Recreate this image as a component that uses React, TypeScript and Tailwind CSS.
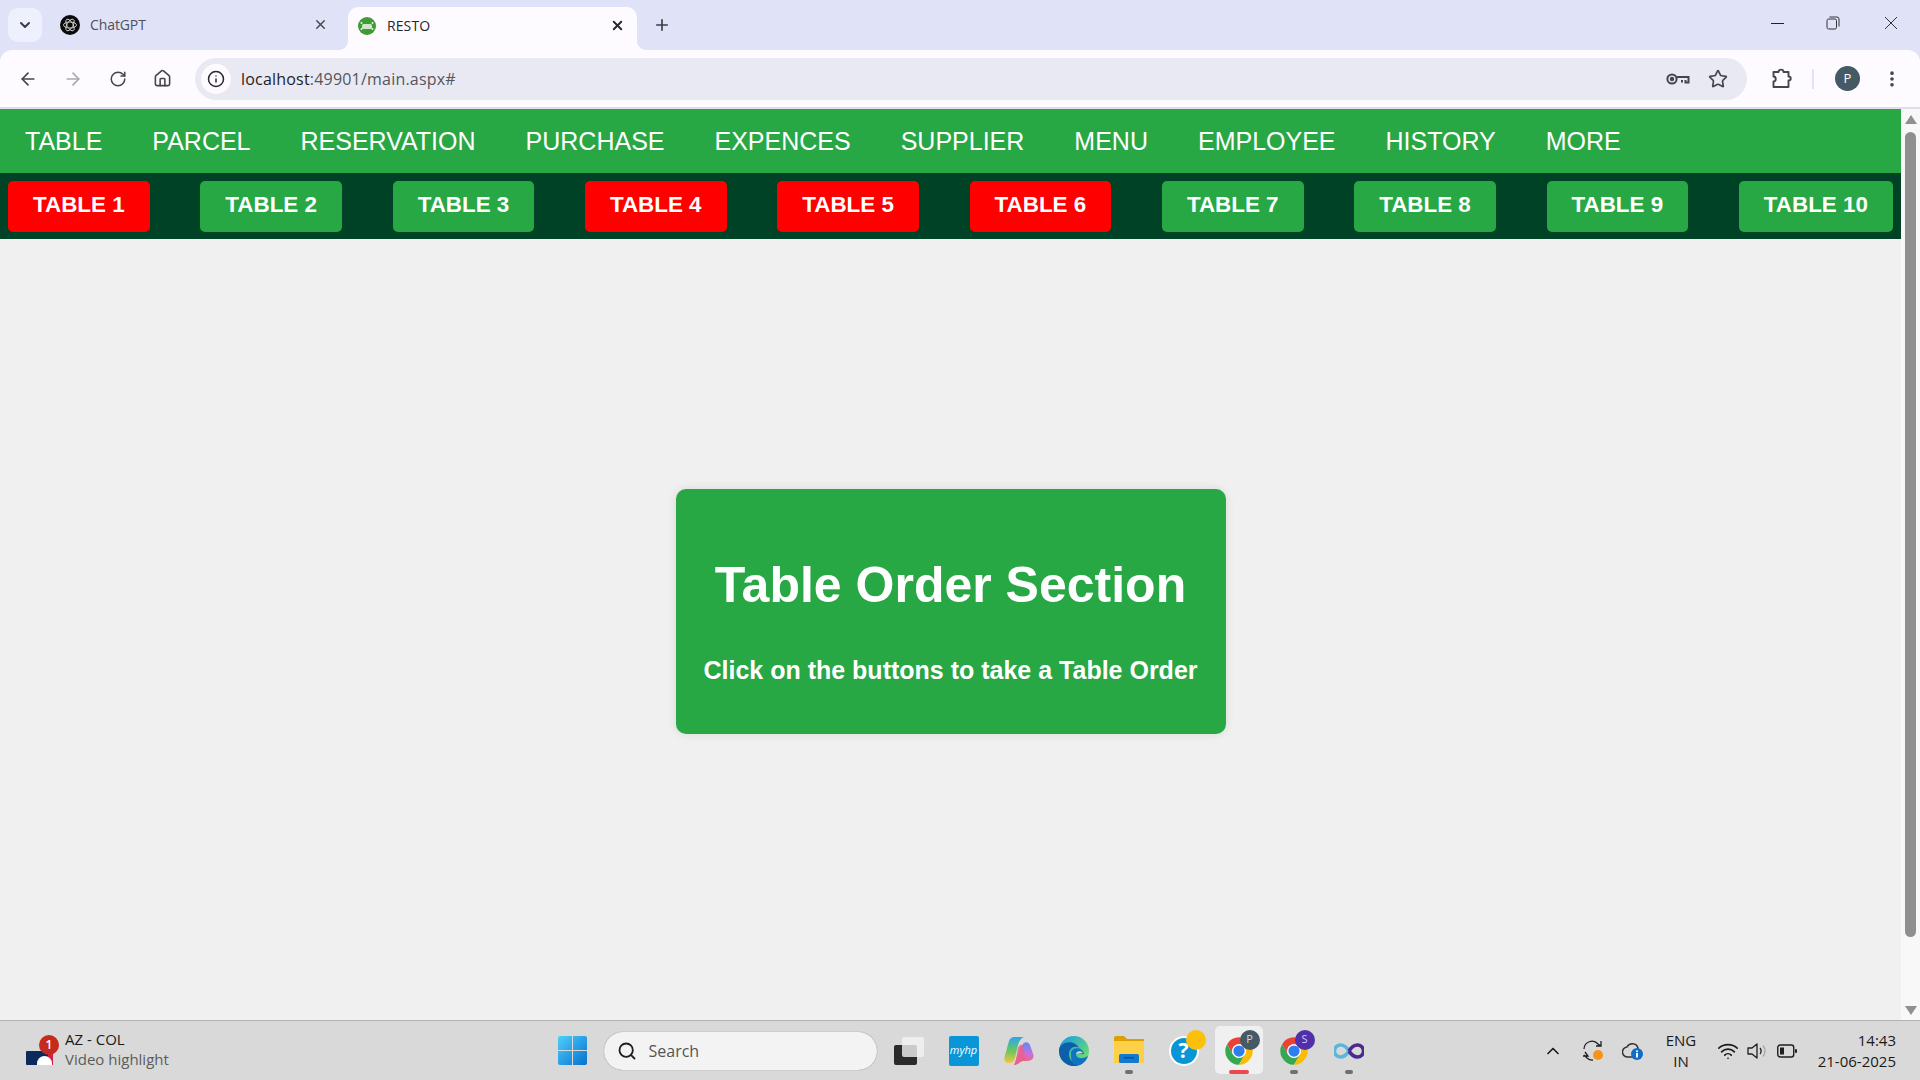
import { ArrowLeft, ArrowRight, ChevronDown, ChevronUp, House, Info, MoreVertical, Plus, RotateCw, Search, Star, Wifi, X } from 'lucide-react';

const navItems = ['TABLE', 'PARCEL', 'RESERVATION', 'PURCHASE', 'EXPENCES', 'SUPPLIER', 'MENU', 'EMPLOYEE', 'HISTORY', 'MORE'];

const tables = [
  { name: 'TABLE 1', busy: true },
  { name: 'TABLE 2', busy: false },
  { name: 'TABLE 3', busy: false },
  { name: 'TABLE 4', busy: true },
  { name: 'TABLE 5', busy: true },
  { name: 'TABLE 6', busy: true },
  { name: 'TABLE 7', busy: false },
  { name: 'TABLE 8', busy: false },
  { name: 'TABLE 9', busy: false },
  { name: 'TABLE 10', busy: false },
];

function ChromeLogo() {
  return (
    <svg width="30" height="30" viewBox="0 0 48 48">
      <path d="M4.95 13A22 22 0 0 1 43.05 13H24A11 11 0 0 0 14.47 29.5Z" fill="#ea4335" />
      <path d="M4.95 13A22 22 0 0 0 24 46L33.53 29.5A11 11 0 0 1 14.47 29.5Z" fill="#34a853" />
      <path d="M24 46A22 22 0 0 0 43.05 13H24A11 11 0 0 1 33.53 29.5Z" fill="#fbbc04" />
      <circle cx="24" cy="24" r="11" fill="#fff" />
      <circle cx="24" cy="24" r="9" fill="#2f7df0" />
    </svg>
  );
}

function TaskSlot({ children, dot }: { children: React.ReactNode; dot?: boolean }) {
  return (
    <div className="relative flex h-[60px] w-[55px] items-center justify-center">
      {children}
      {dot && <div className="absolute bottom-[7px] left-1/2 h-[4px] w-[8px] -translate-x-1/2 rounded-full bg-[#6f6f6f]" />}
    </div>
  );
}

function ChromeTabs() {
  return (
    <div className="flex h-[50px] shrink-0 bg-[#e0e2f8] text-[#3d3d45]">
      <div className="ml-2 mt-2 flex h-[34px] w-[34px] items-center justify-center rounded-[10px] bg-[#eff0fe]">
        <ChevronDown size={16} strokeWidth={3} />
      </div>
      <div className="flex h-[50px] w-[306px] items-center pb-[1px] pl-[18px]">
        <svg width="20" height="20" viewBox="0 0 20 20" className="shrink-0">
          <circle cx="10" cy="10" r="10" fill="#0b0b0b" />
          <g fill="none" stroke="#e8e8e8" strokeWidth="0.8">
            <ellipse cx="10" cy="10" rx="6.5" ry="3" />
            <ellipse cx="10" cy="10" rx="6.5" ry="3" transform="rotate(60 10 10)" />
            <ellipse cx="10" cy="10" rx="6.5" ry="3" transform="rotate(120 10 10)" />
          </g>
        </svg>
        <span className="ml-[10px] flex-1 text-[14px] text-[#4f5058] [font-family:'Open_Sans',sans-serif] tracking-[-0.1px]">ChatGPT</span>
        <X size={15} strokeWidth={2.4} className="mr-[20px] text-[#4a4a52]" />
      </div>
      <div className="relative mt-[7px] flex h-[43px] w-[289px] items-center rounded-t-[10px] bg-[#fdfbff] pb-[6px] pl-[10px]">
        <div className="absolute -left-[10px] bottom-0 h-[10px] w-[10px] bg-[radial-gradient(circle_at_0_0,#e0e2f8_10px,#fdfbff_10.5px)]" />
        <div className="absolute -right-[10px] bottom-0 h-[10px] w-[10px] bg-[radial-gradient(circle_at_100%_0,#e0e2f8_10px,#fdfbff_10.5px)]" />
        <svg width="18" height="18" viewBox="0 0 18 18" className="shrink-0">
          <circle cx="9" cy="9" r="9" fill="#3f9a38" />
          <rect x="4" y="7" width="10" height="5" rx="1.5" fill="#cfe6c9" />
          <circle cx="3.5" cy="6" r="1" fill="#e8f3e5" />
          <circle cx="14.5" cy="6" r="1" fill="#e8f3e5" />
          <circle cx="3.5" cy="12" r="1" fill="#e8f3e5" />
          <circle cx="14.5" cy="12" r="1" fill="#e8f3e5" />
        </svg>
        <span className="ml-[11px] flex-1 text-[14px] text-[#26262c] [font-family:'Open_Sans',sans-serif] tracking-[0.1px]">RESTO</span>
        <X size={15} strokeWidth={3} className="mr-[12px] text-[#26262c]" />
      </div>
      <div className="ml-[16px] flex h-[50px] items-center pb-[1px]">
        <Plus size={18} strokeWidth={2.2} />
      </div>
      <div className="ml-auto flex h-[46px] items-center">
        <div className="mr-[42px] h-px w-[13px] bg-[#222]" />
        <svg width="14" height="14" viewBox="0 0 14 14" fill="none" stroke="#333" strokeWidth="1" className="mr-[44px]">
          <rect x="1" y="3" width="9.5" height="10" rx="1.6" />
          <path d="M3.5 1H11a2 2 0 0 1 2 2v7.5" />
        </svg>
        <svg width="14" height="14" viewBox="0 0 14 14" stroke="#333" strokeWidth="1" className="mr-[22px]">
          <path d="M1 1 13 13M13 1 1 13" />
        </svg>
      </div>
    </div>
  );
}

function Toolbar() {
  return (
    <div className="h-[59px] shrink-0 bg-[#e0e2f8]">
      <div className="flex h-[57px] items-center rounded-t-[12px] bg-[#fdfbff] text-[#45454d]">
        <ArrowLeft size={20} strokeWidth={2} className="ml-[18px]" />
        <ArrowRight size={20} strokeWidth={2} className="ml-[25px] text-[#a9a9b0]" />
        <RotateCw size={18} strokeWidth={2} className="ml-[26px]" />
        <House size={19} strokeWidth={2} className="ml-[26px]" />
        <div className="ml-[23px] flex h-[42px] w-[1552px] items-center rounded-full bg-[#e9e9f3]">
          <div className="ml-[6px] flex h-[30px] w-[30px] items-center justify-center rounded-full bg-[#fdfbff]">
            <Info size={18} strokeWidth={2} className="text-[#26262c]" />
          </div>
          <span className="ml-[10px] flex-1 text-[16px] tracking-[0.2px] text-[#55555d] [font-family:'Open_Sans',sans-serif]">
            <span className="text-[#1e1e24]">localhost</span>:49901/main.aspx#
          </span>
          <svg width="24" height="14" viewBox="0 0 24 14" fill="none" stroke="#45454d" strokeWidth="2">
            <circle cx="6" cy="7" r="4.6" />
            <circle cx="6" cy="7" r="1.2" fill="#45454d" />
            <path d="M11 5H22.5V10.5H19.5V8M16 8V10.5" />
          </svg>
          <Star size={20} strokeWidth={2} className="ml-[18px] mr-[19px]" />
        </div>
        <svg width="20" height="21" viewBox="0 0 20 21" fill="none" stroke="#45454d" strokeWidth="1.9" className="ml-[25px]">
          <path d="M1.5 4H6.5C6.5 .8 11.5 .8 11.5 4H16.5V8.5C19.5 8.5 19.5 12.5 16.5 12.5V19H1.5V13.5C4.5 13.5 4.5 8.5 1.5 8.5Z" strokeLinejoin="round" />
        </svg>
        <div className="ml-[20px] h-[20px] w-[2px] bg-[#dfe3fb]" />
        <div className="ml-[21px] flex h-[25px] w-[25px] items-center justify-center rounded-full bg-[#455a64] text-[13px] text-white [font-family:'Open_Sans',sans-serif]">P</div>
        <MoreVertical size={20} strokeWidth={2.4} className="ml-[22px]" />
      </div>
      <div className="h-[2px] bg-[#dfdde8]" />
    </div>
  );
}

function PageContent() {
  return (
    <div className="flex min-w-0 flex-1 flex-col bg-[#f0f0f0] [font-family:'Liberation_Sans',Arial,sans-serif] text-white">
      <nav className="flex h-[64px] shrink-0 items-center bg-[#28a745] text-[25px]">
        {navItems.map((item) => (
          <a key={item} className="px-[25px] leading-[28px]">{item}</a>
        ))}
      </nav>
      <div className="flex h-[66px] shrink-0 items-center justify-between bg-[#004225] px-2">
        {tables.map((table) => (
          <button
            key={table.name}
            className={`h-[51px] rounded-[5px] px-[25px] pb-[3px] text-[22.4px] font-bold ${table.busy ? 'bg-[#ff0000]' : 'bg-[#28a745]'}`}
          >
            {table.name}
          </button>
        ))}
      </div>
      <div className="flex flex-1 items-center justify-center pb-[36px]">
        <div className="flex h-[245px] w-[550px] flex-col items-center rounded-[10px] bg-[#28a745] pt-[69px] shadow-[0_0_10px_rgba(0,0,0,0.1)]">
          <h1 className="text-[50px] font-bold leading-[55px]">Table Order Section</h1>
          <p className="mt-[43px] text-[25px] font-bold leading-[29px]">Click on the buttons to take a Table Order</p>
        </div>
      </div>
    </div>
  );
}

function Scrollbar() {
  return (
    <div className="flex w-[19px] shrink-0 flex-col items-center bg-[#f8f8f8] pt-[6px]">
      <div className="h-0 w-0 border-x-[6.5px] border-b-[9px] border-x-transparent border-b-[#8f8f8f]" />
      <div className="mt-[8px] h-[805px] w-[11px] rounded-full bg-[#8f8f8f]" />
      <div className="mt-[69px] h-0 w-0 border-x-[6.5px] border-t-[9px] border-x-transparent border-t-[#8f8f8f]" />
    </div>
  );
}

function Taskbar() {
  return (
    <div className="flex h-[60px] shrink-0 items-center border-t border-[#b2b2b2] bg-[#d9d9d9] [font-family:'Open_Sans',sans-serif]">
      <div className="relative ml-[26px] h-[28px] w-[27px]">
        <div className="absolute bottom-0 left-0 h-[14px] w-[27px] rounded-[1px] bg-[#0b2a5b]" />
        <div className="absolute bottom-0 right-0 h-[14px] w-[5px] bg-[#d2204c]" />
        <div className="absolute bottom-0 left-[11px] h-[9px] w-[15px] rounded-t-full bg-white" />
        <div className="absolute -right-[6px] -top-[2px] flex h-[20px] w-[20px] items-center justify-center rounded-full bg-[#c42b1c] text-[12px] font-semibold text-white">1</div>
      </div>
      <div className="ml-[12px] w-[150px] pb-[3px] leading-[20px]">
        <div className="text-[15px] text-[#1a1a1a]">AZ - COL</div>
        <div className="text-[15px] text-[#5c5c5c]">Video highlight</div>
      </div>
      <svg width="29" height="29" viewBox="0 0 29 29" className="ml-[342.5px]">
        <defs>
          <linearGradient id="win" x1="0" y1="0" x2="1" y2="1">
            <stop offset="0" stopColor="#4fd0fb" />
            <stop offset="1" stopColor="#0670d0" />
          </linearGradient>
        </defs>
        <path d="M2 0H14V14H0V2A2 2 0 0 1 2 0ZM15 0H27A2 2 0 0 1 29 2V14H15ZM0 15H14V29H2A2 2 0 0 1 0 27ZM15 15H29V27A2 2 0 0 1 27 29H15Z" fill="url(#win)" />
      </svg>
      <div className="ml-[17px] flex h-[38px] w-[273px] items-center rounded-full bg-[#f3f3f3] shadow-[0_0_1px_rgba(0,0,0,0.5)]">
        <Search size={20} strokeWidth={2.2} className="ml-[13px] text-[#1f1f1f]" />
        <span className="ml-[12px] text-[16px] text-[#555]">Search</span>
      </div>
      <div className="ml-[4.5px] flex">
        <TaskSlot>
          <div className="relative h-[28px] w-[30px]">
            <div className="absolute bottom-0 left-0 h-[20px] w-[23px] rounded-[2px] bg-[#2a2a2a]" />
            <div className="absolute right-0 top-0 h-[20px] w-[22px] rounded-[2px] bg-[#f2f2f2]/80" />
          </div>
        </TaskSlot>
        <TaskSlot>
          <div className="flex h-[30px] w-[30px] items-center justify-center rounded-[2px] bg-[#0a96d6] text-[11px] italic text-white">myhp</div>
        </TaskSlot>
        <TaskSlot>
          <svg width="30" height="30" viewBox="0 0 30 30">
            <defs>
              <linearGradient id="cp1" x1="0" y1="0" x2="0" y2="1">
                <stop offset="0" stopColor="#2aa6f0" />
                <stop offset="0.55" stopColor="#6fc85a" />
                <stop offset="1" stopColor="#f5c542" />
              </linearGradient>
              <linearGradient id="cp2" x1="0" y1="0" x2="0" y2="1">
                <stop offset="0" stopColor="#5a8ef0" />
                <stop offset="0.5" stopColor="#c86ee0" />
                <stop offset="1" stopColor="#f0705a" />
              </linearGradient>
            </defs>
            <path d="M19 8C21 5 25 6 26 9L29.5 19C30 23 27 25 24 25H19C16 25 14 29 10 29C12 25 15 12 19 8Z" fill="url(#cp2)" />
            <path d="M10 1H20C17 2 15 5 14 9L11 22C10 26 8 27 5 27H4C1 27 0 24 .5 21L5 5C6 2 8 1 10 1Z" fill="url(#cp1)" />
            <path d="M14 12C16 8 18 8 19 10L22 25H19C16 25 14 29 10 29C12 26 13 18 14 12Z" fill="#ec5f8c" opacity="0.85" />
          </svg>
        </TaskSlot>
        <TaskSlot>
          <svg width="30" height="30" viewBox="0 0 30 30">
            <defs>
              <linearGradient id="edgeA" x1="0.2" y1="0" x2="1" y2="0.7">
                <stop offset="0" stopColor="#1d9fe0" />
                <stop offset="1" stopColor="#6fe06a" />
              </linearGradient>
            </defs>
            <circle cx="15" cy="15" r="15" fill="url(#edgeA)" />
            <path d="M0 15A15 15 0 0 0 24 27C18 30 10 26 10 18C10 12 16 9 20 12C16 3 0 5 0 15Z" fill="#0c5fa8" />
            <path d="M12 17C12 11 24 10 25 18H17C17 22 22 24 29 20C27 26 22 30 17 29C12 28 12 22 12 17Z" fill="#0f74c0" />
            <path d="M17 18C17 15 22 14 24 17Z" fill="#d9d9d9" />
          </svg>
        </TaskSlot>
        <TaskSlot dot>
          <svg width="30" height="27" viewBox="0 0 30 27" className="mb-[2px]">
            <path d="M0 2A2 2 0 0 1 2 0H10L13 3H30V10H0Z" fill="#dca000" />
            <path d="M0 5H30V27H0Z" fill="#fdd048" />
            <rect x="5" y="18" width="20" height="9" rx="1.5" fill="#0f7ad0" />
            <rect x="10" y="21" width="10" height="1.5" fill="#0a4f8a" />
          </svg>
        </TaskSlot>
        <TaskSlot>
          <div className="relative h-[30px] w-[30px]">
            <div className="absolute inset-0 flex items-center justify-center rounded-full border-2 border-white bg-[#0a96d6] text-[21px] font-bold text-white">?</div>
            <div className="absolute -right-[7px] -top-[6px] h-[20px] w-[20px] rounded-full bg-[#fcc00a]" />
          </div>
        </TaskSlot>
        <div className="relative">
          <div className="absolute left-[3.5px] top-[5px] h-[48px] w-[48px] rounded-[5px] bg-[#f0f0f0]" />
          <TaskSlot>
            <div className="relative h-[30px] w-[30px]">
              <ChromeLogo />
              <div className="absolute -right-[6px] -top-[6px] flex h-[20px] w-[20px] items-center justify-center rounded-full bg-[#455a64] text-[11px] text-[#cfd8dc]">P</div>
            </div>
          </TaskSlot>
          <div className="absolute bottom-[7px] left-1/2 h-[4px] w-[20px] -translate-x-1/2 rounded-full bg-[#f04848]" />
        </div>
        <TaskSlot dot>
          <div className="relative h-[30px] w-[30px]">
            <ChromeLogo />
            <div className="absolute -right-[6px] -top-[6px] flex h-[20px] w-[20px] items-center justify-center rounded-full bg-[#5030a8] text-[11px] text-[#d5c8f5]">S</div>
          </div>
        </TaskSlot>
        <TaskSlot dot>
          <svg width="30" height="16" viewBox="0 0 30 16" fill="none" strokeWidth="3.5">
            <path d="M15 8C12 3 9 2 6.5 2A6 6 0 0 0 6.5 14C9 14 12 13 15 8" stroke="#5db5dc" />
            <path d="M15 8C18 3 21 2 23.5 2A6 6 0 0 1 23.5 14C21 14 18 13 15 8" stroke="#4b2a8f" />
          </svg>
        </TaskSlot>
      </div>
      <div className="flex flex-1 items-center text-[#1a1a1a]">
        <ChevronUp size={20} strokeWidth={2} className="ml-[167px]" />
        <svg width="22" height="22" viewBox="0 0 22 22" fill="none" stroke="#1f1f1f" strokeWidth="1.3" className="ml-[19px]">
          <path d="M2 9A8 8 0 0 1 16 4L19 6M19 1V6H14" />
          <path d="M3 12L6 16H1M2 15L5 18A8 8 0 0 0 11 20" />
          <circle cx="16" cy="15" r="5" fill="#f7931a" stroke="none" />
        </svg>
        <svg width="22" height="18" viewBox="0 0 22 18" className="ml-[18px]">
          <path d="M6 15A5 5 0 0 1 5 5A6 6 0 0 1 16 6L12 15Z" fill="#d9d9d9" stroke="#333" strokeWidth="1.5" />
          <circle cx="15" cy="12" r="6" fill="#0f6cc8" />
          <rect x="14" y="11" width="2" height="4.5" fill="#fff" />
          <rect x="14" y="8.5" width="2" height="1.6" fill="#fff" />
        </svg>
        <div className="ml-[15px] w-[44px] text-center text-[15px] leading-[21px]">
          <div>ENG</div>
          <div>IN</div>
        </div>
        <Wifi size={22} strokeWidth={1.8} className="ml-[14px]" />
        <svg width="22" height="20" viewBox="0 0 22 20" fill="none" strokeWidth="1.3" className="ml-[7px]">
          <path d="M2 7H6L11 3V17L6 13H2Z" stroke="#1f1f1f" strokeLinejoin="round" />
          <path d="M14 7C15.5 9 15.5 11 14 13" stroke="#1f1f1f" />
          <path d="M17 4.5C19.5 8 19.5 12 17 15.5" stroke="#a5a5a5" />
        </svg>
        <svg width="20" height="14" viewBox="0 0 20 14" fill="none" className="ml-[9px]">
          <rect x=".75" y="1" width="16" height="12" rx="2.5" stroke="#1f1f1f" strokeWidth="1.4" />
          <rect x="3" y="3.5" width="4" height="7" fill="#1f1f1f" />
          <rect x="18" y="5" width="2" height="4" rx="1" fill="#1f1f1f" />
        </svg>
        <div className="ml-auto mr-[24px] text-right text-[15px] leading-[21px]">
          <div>14:43</div>
          <div>21-06-2025</div>
        </div>
      </div>
    </div>
  );
}

export default function App() {
  return (
    <div className="flex h-[1080px] w-[1920px] flex-col overflow-hidden">
      <ChromeTabs />
      <Toolbar />
      <div className="flex min-h-0 flex-1">
        <PageContent />
        <Scrollbar />
      </div>
      <Taskbar />
    </div>
  );
}
